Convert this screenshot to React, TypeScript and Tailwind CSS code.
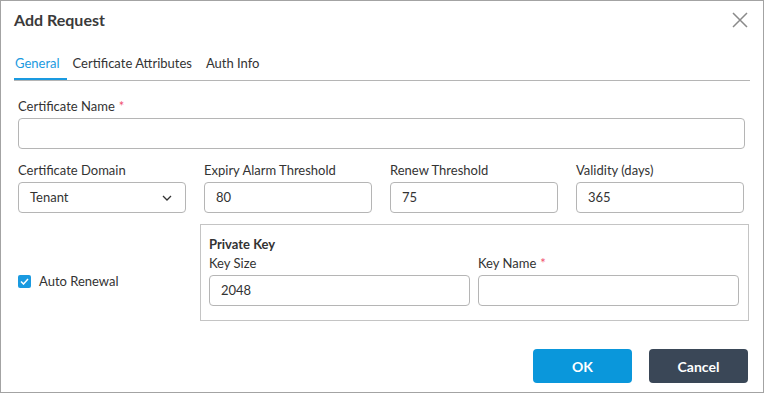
import React from 'react';

const Label = ({ text, required }: { text: string; required?: boolean }) => (
  <span className="mb-[4px] block text-[13px] leading-[16px] text-[#333]">
    {text}
    {required && <span className="ml-[4px] text-[#f0506e]">*</span>}
  </span>
);

const Input = ({ value, className = '' }: { value?: string; className?: string }) => (
  <div
    className={`flex h-[31px] items-center rounded-[4px] border border-[#b5b5b5] bg-white px-[11px] text-[13px] text-[#333] ${className}`}
  >
    {value}
  </div>
);

const App = () => {
  return (
    <div
      className="flex h-[393px] w-[764px] flex-col border border-[#a3a3a3] bg-white"
      style={{ fontFamily: 'Lato, "Open Sans", sans-serif' }}
    >
      <div className="flex items-center justify-between pl-[13px] pr-[15px] pt-[9px]">
        <h1 className="text-[16px] font-bold leading-[20px] text-[#3a3a3a]">Add Request</h1>
        <svg width="16" height="16" viewBox="0 0 16 16">
          <path d="M1 1L15 15M15 1L1 15" stroke="#8a8a8a" strokeWidth="1.5" />
        </svg>
      </div>

      <div className="mx-[13px] mt-[25px] flex border-b border-[#b5b5b5] text-[13px] leading-[16px]">
        <div className="border-b-2 border-[#1a9ae0] pb-[7px] pl-[1px] pr-[7px] text-[#1a9ae0]">General</div>
        <div className="pb-[7px] pl-[6px] pr-[14px] text-[#333]">Certificate Attributes</div>
        <div className="pb-[7px] text-[#333]">Auth Info</div>
      </div>

      <div className="pl-[17px] pr-[14px] pt-[17px]">
        <Label text="Certificate Name" required />
        <Input className="w-[727px]" />

        <div className="mt-[13px] grid w-[726px] grid-cols-4 gap-x-[18px]">
          <div>
            <Label text="Certificate Domain" />
            <div className="flex h-[31px] items-center justify-between rounded-[4px] border border-[#b5b5b5] pl-[11px] pr-[13px] text-[13px] text-[#333]">
              Tenant
              <svg width="10" height="6" viewBox="0 0 10 6">
                <path d="M1 1L5 5L9 1" fill="none" stroke="#333" strokeWidth="1.3" />
              </svg>
            </div>
          </div>
          <div>
            <Label text="Expiry Alarm Threshold" />
            <Input value="80" />
          </div>
          <div>
            <Label text="Renew Threshold" />
            <Input value="75" />
          </div>
          <div>
            <Label text="Validity (days)" />
            <Input value="365" />
          </div>
        </div>

        <div className="mt-[11px] flex">
          <label className="mb-[32px] flex w-[182px] shrink-0 items-center gap-[8px] self-end text-[13px] leading-[16px] text-[#333]">
            <span className="flex h-[13px] w-[13px] items-center justify-center rounded-[2px] bg-[#1a9ae0]">
              <svg width="9" height="7" viewBox="0 0 9 7">
                <path d="M1 3.5L3.5 6L8 1" fill="none" stroke="white" strokeWidth="1.5" />
              </svg>
            </span>
            Auto Renewal
          </label>
          <div className="w-[549px] shrink-0 border border-[#c4c4c4] pb-[14px] pl-[8px] pr-[9px] pt-[11px]">
            <div className="text-[13px] font-bold leading-[16px] text-[#333]">Private Key</div>
            <div className="mt-[3px] grid grid-cols-2 gap-x-[8px]">
              <div>
                <Label text="Key Size" />
                <Input value="2048" />
              </div>
              <div>
                <Label text="Key Name" required />
                <Input />
              </div>
            </div>
          </div>
        </div>
      </div>

      <div className="mt-auto flex justify-end gap-[17px] pb-[9px] pr-[15px]">
        <button className="h-[34px] w-[99px] rounded-[4px] bg-[#0a97db] text-[14px] font-bold text-white">OK</button>
        <button className="h-[34px] w-[99px] rounded-[4px] bg-[#3a4757] text-[14px] font-bold text-white">Cancel</button>
      </div>
    </div>
  );
};

export default App;
